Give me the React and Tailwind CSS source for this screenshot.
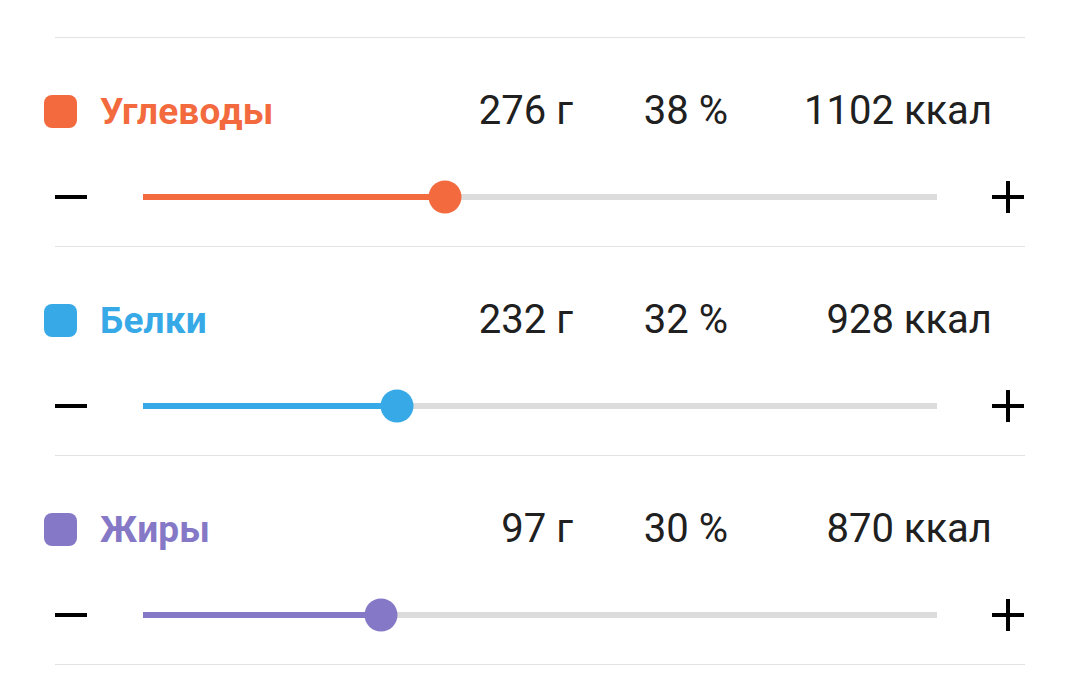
import React from 'react';

const macros = [
  { name: 'Углеводы', grams: '276 г', pct: 38, kcal: '1102 ккал', color: '#f36a3f' },
  { name: 'Белки', grams: '232 г', pct: 32, kcal: '928 ккал', color: '#37a9e7' },
  { name: 'Жиры', grams: '97 г', pct: 30, kcal: '870 ккал', color: '#8578c6' },
];

function Slider({ value, color }) {
  return (
    <div className="flex items-center h-[34px] pl-[11px] pr-[12px]">
      {/* minus button */}
      <div className="w-[33px] h-[34px] flex items-center">
        <div className="w-[32px] h-[4px] bg-black" />
      </div>
      <div className="relative flex-1 mx-[55px] h-[6px] bg-[#dcdcdc]">
        <div className="absolute left-0 top-0 h-full" style={{ width: `${value}%`, backgroundColor: color }} />
        <div
          className="absolute top-1/2 w-[33px] h-[33px] rounded-full -translate-x-1/2 -translate-y-1/2"
          style={{ left: `${value}%`, backgroundColor: color }}
        />
      </div>
      {/* plus button */}
      <div className="relative w-[32px] h-[32px]">
        <div className="absolute left-0 top-[14px] w-[32px] h-[4px] bg-black" />
        <div className="absolute top-0 left-[14px] w-[4px] h-[32px] bg-black" />
      </div>
    </div>
  );
}

function MacroRow({ m }) {
  return (
    <div className="px-[44px] pt-[51px] pb-[32px]">
      <div className="flex items-center h-[44px]">
        <div className="w-[33px] h-[33px] rounded-[8px] shrink-0" style={{ backgroundColor: m.color }} />
        <div className="ml-[23px] flex-1 text-[37px] font-bold leading-none tracking-[0.2px]" style={{ color: m.color }}>
          {m.name}
        </div>
        <div className="w-[200px] text-right text-[40px] leading-none text-[#202020]">{m.grams}</div>
        <div className="w-[155px] text-right text-[40px] leading-none text-[#202020]">{m.pct} %</div>
        <div className="w-[264px] mr-[44px] text-right text-[40px] leading-none text-[#202020]">{m.kcal}</div>
      </div>
      <div className="mt-[47px]">
        <Slider value={m.pct} color={m.color} />
      </div>
    </div>
  );
}

export default function App() {
  return (
    <div className="w-[1080px] h-[677px] bg-white overflow-hidden font-['Roboto',sans-serif]">
      <div className="h-[37px]" />
      <div className="mx-[55px] h-px bg-[#e3e3e3]" />
      {macros.map((m) => (
        <React.Fragment key={m.name}>
          <MacroRow m={m} />
          <div className="mx-[55px] h-px bg-[#e3e3e3]" />
        </React.Fragment>
      ))}
    </div>
  );
}
